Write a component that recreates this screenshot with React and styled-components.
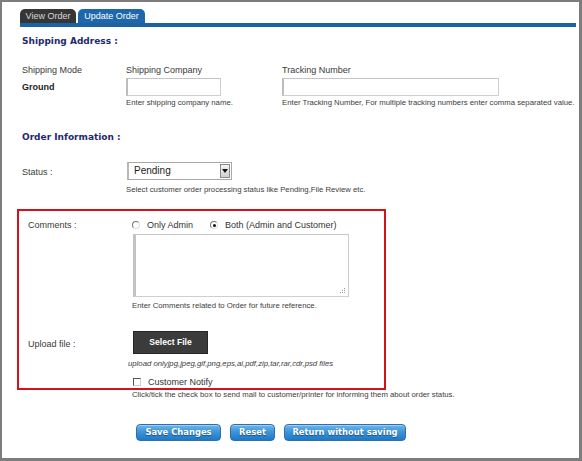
import React from "react";
import styled, { createGlobalStyle } from "styled-components";

const GlobalStyle = createGlobalStyle`
  html, body { margin: 0; padding: 0; background: #fff; }
  body { font-family: "Liberation Sans", Arial, sans-serif; color: #3a3a3a; }
  * { box-sizing: border-box; }
`;

const Frame = styled.div`
  width: 582px;
  height: 461px;
  border: 2px solid #7d7d7d;
  border-right-width: 3px;
  border-bottom-width: 3px;
  background: #fff;
  padding: 7px 3px 0 18px;
  overflow: hidden;
`;

const TabBar = styled.div`
  display: flex;
  gap: 2px;
  height: 14px;
`;

const Tab = styled.div`
  width: ${(p) => p.$w}px;
  height: 14px;
  border-radius: 5px 5px 0 0;
  background: ${(p) => (p.$active ? "#1d67aa" : "#363636")};
  color: ${(p) => (p.$active ? "#ffffff" : "#d8d8d8")};
  font-size: 9px;
  line-height: 14px;
  text-align: center;
`;

const Rule = styled.div`
  height: 4px;
  background: #1b62a4;
`;

const Content = styled.div`
  display: flex;
  flex-direction: column;
`;

const SectionTitle = styled.div`
  font-family: "DejaVu Sans", Verdana, sans-serif;
  font-weight: bold;
  font-size: 9px;
  line-height: 12px;
  color: #1f2a6e;
  padding-left: 2px;
  margin-top: ${(p) => p.$mt}px;
`;

const ShippingGrid = styled.div`
  display: grid;
  grid-template-columns: 104px 156px 1fr;
  padding-left: 2px;
  margin-top: 17px;
`;

const Col = styled.div`
  display: flex;
  flex-direction: column;
`;

const Label = styled.div`
  font-size: 9px;
  line-height: 12px;
  color: #3a3a3a;
  margin-top: ${(p) => p.$mt || 0}px;
`;

const Value = styled.div`
  font-size: 9px;
  line-height: 12px;
  font-weight: bold;
  color: #222;
  margin-top: 5px;
`;

const TextInput = styled.div`
  width: ${(p) => p.$w}px;
  height: 18px;
  margin-top: 2px;
  border: 1px solid #cfcfcf;
  border-left: 2px solid #bdbdbd;
  border-top-color: #c4c4c4;
  background: #fff;
`;

const Hint = styled.div`
  font-size: 7.75px;
  line-height: 10px;
  color: #3c3c3c;
  white-space: nowrap;
  margin-top: ${(p) => p.$mt || 0}px;
  margin-left: ${(p) => p.$ml || 0}px;
  font-style: ${(p) => (p.$italic ? "italic" : "normal")};
`;

const FormRow = styled.div`
  display: grid;
  grid-template-columns: 104px 1fr;
  padding-left: ${(p) => p.$pl || 0}px;
  margin-top: ${(p) => p.$mt || 0}px;
`;

const SelectBox = styled.div`
  width: 105px;
  height: 18px;
  margin-left: 1px;
  border: 1px solid #a8a8a8;
  border-left: 2px solid #b8b8b8;
  display: flex;
  align-items: stretch;
  background: #fff;
`;

const SelectText = styled.div`
  flex: 1;
  font-size: 10px;
  line-height: 15px;
  padding-left: 5px;
  color: #222;
`;

const SelectArrow = styled.div`
  width: 10px;
  margin: 1px 1px 1px 0;
  background: linear-gradient(#f4f4f4, #cfcfcf);
  border: 1px solid #8a8a8a;
  display: flex;
  align-items: center;
  justify-content: center;
`;

const Highlight = styled.div`
  width: 369px;
  margin-left: -3px;
  margin-top: 14px;
  border: 2px solid #d5121b;
  padding: 8px 0 0 9px;
  display: flex;
  flex-direction: column;
`;

const RadioGroup = styled.div`
  display: flex;
  align-items: center;
  height: 12px;
`;

const Choice = styled.label`
  display: flex;
  align-items: center;
  gap: 7px;
  font-size: 9px;
  line-height: 12px;
  color: #333;
  margin-right: ${(p) => p.$mr || 0}px;
`;

const RadioDot = styled.span`
  width: 8px;
  height: 8px;
  border-radius: 50%;
  border: 1px solid #777;
  border-right-color: #ddd;
  border-bottom-color: #ddd;
  background: #fff;
  display: flex;
  align-items: center;
  justify-content: center;
  &::after {
    content: "";
    width: 3px;
    height: 3px;
    border-radius: 50%;
    background: ${(p) => (p.$on ? "#111" : "transparent")};
  }
`;

const AreaWrap = styled.div`
  position: relative;
  width: 216px;
  height: 63px;
  margin-top: 3px;
  margin-left: 1px;
  border: 1px solid #cfcfcf;
  border-left: 3px solid #c2c2c2;
  border-top-color: #c4c4c4;
  background: #fff;
`;

const Grip = styled.svg`
  position: absolute;
  right: 2px;
  bottom: 2px;
`;

const FileButton = styled.div`
  width: 75px;
  height: 23px;
  margin-left: 1px;
  background: #3b3b3b;
  border: 1px solid #262626;
  color: #fff;
  font-weight: bold;
  font-size: 8.6px;
  line-height: 21px;
  text-align: center;
`;

const CheckRow = styled.label`
  display: flex;
  align-items: center;
  gap: 7px;
  height: 12px;
  margin-top: 7px;
  margin-left: 1px;
  font-size: 9px;
  color: #333;
`;

const CheckSquare = styled.span`
  width: 8px;
  height: 8px;
  border: 1px solid #555;
  border-right-color: #ccc;
  border-bottom-color: #ccc;
  background: #fff;
`;

const ButtonBar = styled.div`
  display: flex;
  gap: 9px;
  padding-left: 116px;
  margin-top: 24px;
`;

const ActionButton = styled.div`
  width: ${(p) => p.$w}px;
  height: 17px;
  border-radius: 4px;
  border: 1px solid #2a6fae;
  background: linear-gradient(#6fb6ec 0%, #3d95d9 45%, #1f78c4 100%);
  color: #fff;
  font-family: "DejaVu Sans", Verdana, sans-serif;
  font-weight: bold;
  font-size: 8.4px;
  line-height: 15px;
  text-align: center;
  text-shadow: 0 1px 1px #1a4d80;
  white-space: nowrap;
  box-shadow: inset 0 1px 0 rgba(255, 255, 255, 0.35);
`;

export default function App() {
  return (
    <>
      <GlobalStyle />
      <Frame>
        <TabBar>
          <Tab $w={56}>View Order</Tab>
          <Tab $w={67} $active>Update Order</Tab>
        </TabBar>
        <Rule />
        <Content>
          <SectionTitle $mt={8}>Shipping Address :</SectionTitle>
          <ShippingGrid>
            <Col>
              <Label>Shipping Mode</Label>
              <Value>Ground</Value>
            </Col>
            <Col>
              <Label>Shipping Company</Label>
              <TextInput $w={95} />
              <Hint $mt={2}>Enter shipping company name.</Hint>
            </Col>
            <Col>
              <Label>Tracking Number</Label>
              <TextInput $w={217} />
              <Hint $mt={2}>
                Enter Tracking Number, For multiple tracking numbers enter comma separated value.
              </Hint>
            </Col>
          </ShippingGrid>

          <SectionTitle $mt={23}>Order Information :</SectionTitle>
          <FormRow $pl={2} $mt={19}>
            <Label $mt={4}>Status :</Label>
            <Col>
              <SelectBox>
                <SelectText>Pending</SelectText>
                <SelectArrow>
                  <svg width="6" height="4" viewBox="0 0 6 4">
                    <path d="M0 0h6L3 4z" fill="#111" />
                  </svg>
                </SelectArrow>
              </SelectBox>
              <Hint $mt={5}>
                Select customer order processing status like Pending,File Review etc.
              </Hint>
            </Col>
          </FormRow>

          <Highlight>
            <FormRow>
              <Label>Comments :</Label>
              <Col>
                <RadioGroup>
                  <Choice $mr={17}>
                    <RadioDot />
                    Only Admin
                  </Choice>
                  <Choice>
                    <RadioDot $on />
                    Both (Admin and Customer)
                  </Choice>
                </RadioGroup>
                <AreaWrap>
                  <Grip width="7" height="7" viewBox="0 0 7 7">
                    <g fill="#9a9a9a">
                      <rect x="5" y="1" width="1" height="1" />
                      <rect x="3" y="3" width="1" height="1" />
                      <rect x="5" y="3" width="1" height="1" />
                      <rect x="1" y="5" width="1" height="1" />
                      <rect x="3" y="5" width="1" height="1" />
                      <rect x="5" y="5" width="1" height="1" />
                    </g>
                  </Grip>
                </AreaWrap>
                <Hint $mt={4}>Enter Comments related to Order for future reference.</Hint>
              </Col>
            </FormRow>
            <FormRow $mt={20}>
              <Label $mt={7}>Upload file :</Label>
              <Col>
                <FileButton>Select File</FileButton>
                <Hint $mt={5} $ml={-4} $italic>
                  upload onlyjpg,jpeg,gif,png,eps,ai,pdf,zip,tar,rar,cdr,psd files
                </Hint>
                <CheckRow>
                  <CheckSquare />
                  Customer Notify
                </CheckRow>
              </Col>
            </FormRow>
          </Highlight>
          <FormRow $pl={8}>
            <span />
            <Hint>
              Click/tick the check box to send mail to customer/printer for informing them about order status.
            </Hint>
          </FormRow>

          <ButtonBar>
            <ActionButton $w={85}>Save Changes</ActionButton>
            <ActionButton $w={45}>Reset</ActionButton>
            <ActionButton $w={122}>Return without saving</ActionButton>
          </ButtonBar>
        </Content>
      </Frame>
    </>
  );
}
